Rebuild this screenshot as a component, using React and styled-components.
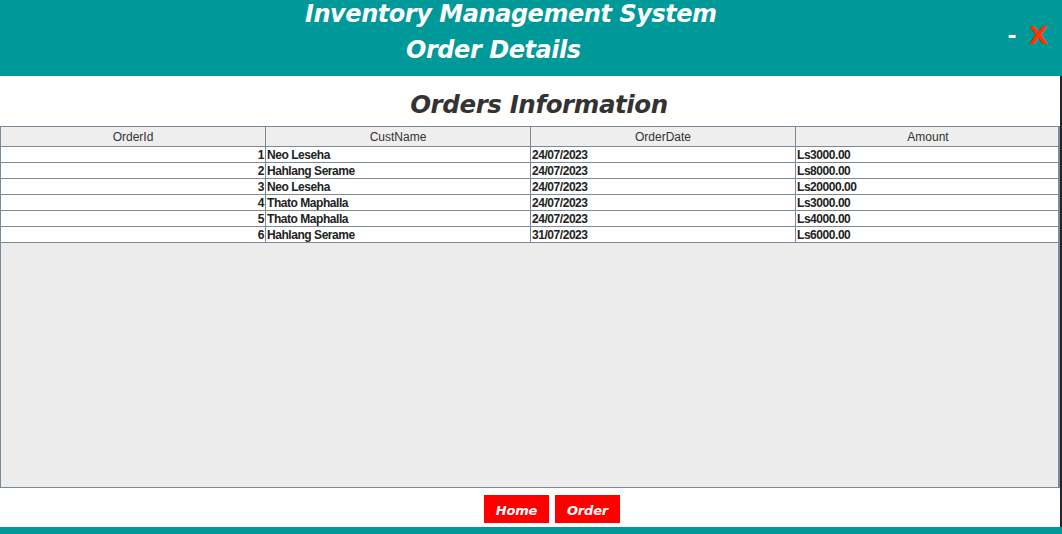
import React from "react";
import styled, { createGlobalStyle } from "styled-components";

const Global = createGlobalStyle`
  html, body { margin: 0; padding: 0; background: #ffffff; }
  body { width: 1062px; height: 534px; overflow: hidden; }
`;

const Page = styled.div`
  width: 1062px;
  height: 534px;
  display: flex;
  flex-direction: column;
`;

const Header = styled.header`
  height: 76px;
  background: #009999;
  display: flex;
  align-items: flex-start;
  flex-shrink: 0;
  overflow: hidden;
`;

const Titles = styled.div`
  display: flex;
  flex-direction: column;
  margin-top: -4px;
`;

const HeadTitle = styled.div`
  margin-left: ${(p) => p.$indent}px;
  font-family: "DejaVu Sans", Verdana, sans-serif;
  font-weight: bold;
  font-style: italic;
  font-size: 24px;
  letter-spacing: -0.45px;
  line-height: 36px;
  height: 36px;
  color: #ffffff;
  white-space: nowrap;
`;

const Controls = styled.div`
  margin-left: auto;
  display: flex;
  align-items: center;
  gap: 12px;
  padding: 24px 14px 0 0;
  font-family: "DejaVu Sans", Verdana, sans-serif;
  font-weight: bold;
`;

const Ctrl = styled.span`
  color: ${(p) => p.$color};
  font-size: ${(p) => p.$size}px;
  line-height: 24px;
`;

const Body = styled.main`
  flex: 1;
  display: flex;
  flex-direction: column;
  border-right: 2px solid #23232e;
  min-height: 0;
`;

const Heading = styled.h1`
  margin: 0;
  height: 50px;
  display: flex;
  align-items: center;
  justify-content: center;
  padding: 6px 0 0 18px;
  box-sizing: border-box;
  font-family: "DejaVu Sans", Verdana, sans-serif;
  font-weight: bold;
  font-style: italic;
  font-size: 24.5px;
  letter-spacing: -0.4px;
  color: #333333;
`;

const TableBox = styled.div`
  height: 362px;
  box-sizing: border-box;
  border: 1px solid #7b8a99;
  border-right-width: 2px;
  background: #ececec;
  overflow: hidden;
`;

const Table = styled.table`
  border-collapse: collapse;
  table-layout: fixed;
  width: 1061px;
  margin: -1px 0 0 -1px;
  font-family: "Liberation Sans", Arial, sans-serif;
  font-size: 12px;
  color: #222222;
`;

const Th = styled.th`
  height: 17px;
  padding: 2px 0 0 0;
  background: #eeeeee;
  border: 1px solid #7b8a99;
  font-weight: normal;
  color: #333333;
  text-align: center;
  line-height: 17px;
`;

const Td = styled.td`
  height: 13px;
  padding: 2px 1px 0 1px;
  background: #ffffff;
  border: 1px solid #7b8a99;
  font-weight: bold;
  letter-spacing: -0.45px;
  line-height: 13px;
  text-align: ${(p) => (p.$right ? "right" : "left")};
  white-space: nowrap;
  overflow: hidden;
`;

const ButtonBar = styled.div`
  height: 39px;
  display: flex;
  align-items: center;
  gap: 6px;
  padding-left: 484px;
`;

const Button = styled.button`
  width: 65px;
  height: 28px;
  margin-top: 3px;
  border: none;
  padding: 2px 0 0 0;
  background: #ff0000;
  color: #ffffff;
  font-family: "DejaVu Sans", Verdana, sans-serif;
  font-weight: bold;
  font-style: italic;
  font-size: 13px;
  letter-spacing: -0.2px;
  cursor: pointer;
`;

const Footer = styled.footer`
  height: 7px;
  background: #009999;
  flex-shrink: 0;
`;

const orders = [
  [1, "Neo Leseha", "24/07/2023", "Ls3000.00"],
  [2, "Hahlang Serame", "24/07/2023", "Ls8000.00"],
  [3, "Neo Leseha", "24/07/2023", "Ls20000.00"],
  [4, "Thato Maphalla", "24/07/2023", "Ls3000.00"],
  [5, "Thato Maphalla", "24/07/2023", "Ls4000.00"],
  [6, "Hahlang Serame", "31/07/2023", "Ls6000.00"],
];

export default function App() {
  return (
    <Page>
      <Global />
      <Header>
        <Titles>
          <HeadTitle $indent={305}>Inventory Management System</HeadTitle>
          <HeadTitle $indent={406}>Order Details</HeadTitle>
        </Titles>
        <Controls>
          <Ctrl $color="#ffffff" $size={22}>-</Ctrl>
          <Ctrl $color="#ff3300" $size={25}>X</Ctrl>
        </Controls>
      </Header>
      <Body>
        <Heading>Orders Information</Heading>
        <TableBox>
          <Table>
            <thead>
              <tr>
                <Th>OrderId</Th>
                <Th>CustName</Th>
                <Th>OrderDate</Th>
                <Th>Amount</Th>
              </tr>
            </thead>
            <tbody>
              {orders.map(([id, name, date, amt]) => (
                <tr key={id}>
                  <Td $right>{id}</Td>
                  <Td>{name}</Td>
                  <Td>{date}</Td>
                  <Td>{amt}</Td>
                </tr>
              ))}
            </tbody>
          </Table>
        </TableBox>
        <ButtonBar>
          <Button>Home</Button>
          <Button>Order</Button>
        </ButtonBar>
      </Body>
      <Footer />
    </Page>
  );
}
